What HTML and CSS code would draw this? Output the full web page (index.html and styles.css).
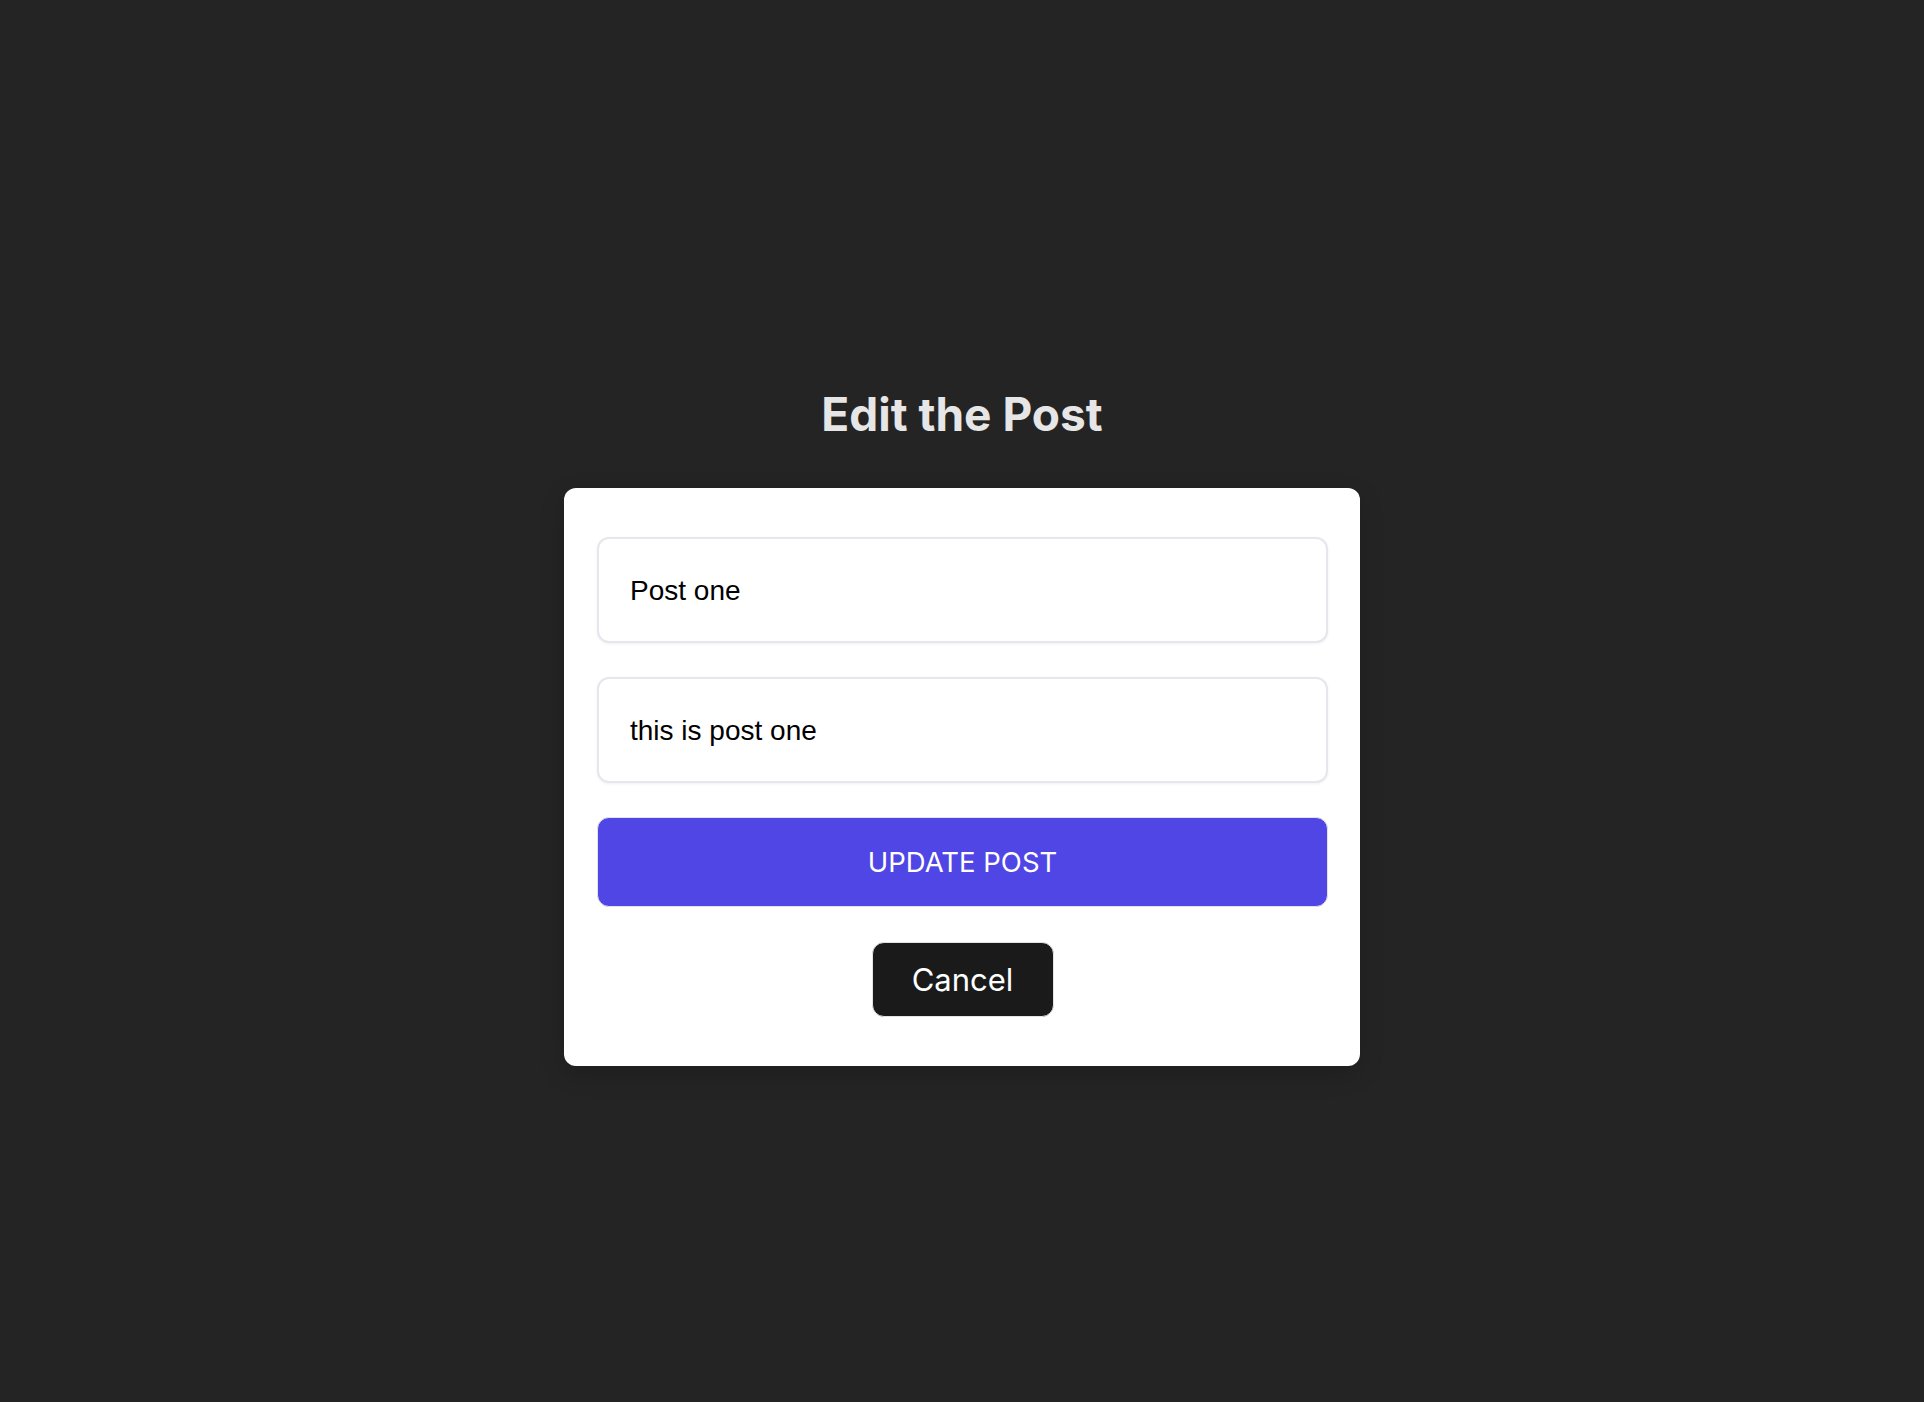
FILE: index.html
```html
<!DOCTYPE html>
<html lang="en">
<head>
<meta charset="utf-8">
<title>Edit the Post</title>
<link rel="stylesheet" href="styles.css">
</head>
<body>
<main class="page">
  <h1 class="title">Edit the Post</h1>
  <form class="card">
    <input class="field" type="text" value="Post one">
    <input class="field" type="text" value="this is post one">
    <button class="primary" type="button">UPDATE POST</button>
    <button class="cancel" type="button">Cancel</button>
  </form>
</main>
</body>
</html>
```
FILE: styles.css
```css
html, body {
  margin: 0;
  padding: 0;
  background: #242424;
}
body {
  font-family: Inter, "Noto Sans", sans-serif;
}
.page {
  display: flex;
  flex-direction: column;
  align-items: center;
  padding-top: 388px;
  min-height: 1402px;
  box-sizing: border-box;
}
.title {
  margin: 0 0 48px;
  font-size: 46px;
  line-height: 52px;
  font-weight: 700;
  color: #e6e6e6;
}
.card {
  width: 796px;
  box-sizing: border-box;
  background: #ffffff;
  border-radius: 12px;
  padding: 49px 32px 49px 33px;
  display: flex;
  flex-direction: column;
  align-items: stretch;
  box-shadow: 0 8px 24px rgba(0,0,0,0.18);
}
.field {
  height: 106px;
  box-sizing: border-box;
  margin: 0 0 34px;
  padding: 2px 31px 0;
  border: 2px solid #e6e6ec;
  border-radius: 12px;
  background: #fff;
  font-family: "Liberation Sans", Arial, sans-serif;
  font-size: 28px;
  color: #000;
  outline: none;
  box-shadow: 0 1px 3px rgba(0,0,0,0.06);
}
.primary {
  height: 90px;
  margin: 0 0 35px;
  border: 1.5px solid #e2e2e8;
  border-radius: 12px;
  background: #4f46e5;
  color: #ffffff;
  font-family: Inter, "Noto Sans", sans-serif;
  font-size: 27.5px;
  font-weight: 400;
  cursor: pointer;
}
.cancel {
  align-self: center;
  width: 182px;
  height: 75px;
  margin: 0;
  padding-bottom: 2px;
  border: 1.5px solid #e2e2e8;
  border-radius: 12px;
  background: #1a1a1a;
  color: #ffffff;
  font-family: Inter, "Noto Sans", sans-serif;
  font-size: 31px;
  font-weight: 400;
  cursor: pointer;
}
```
